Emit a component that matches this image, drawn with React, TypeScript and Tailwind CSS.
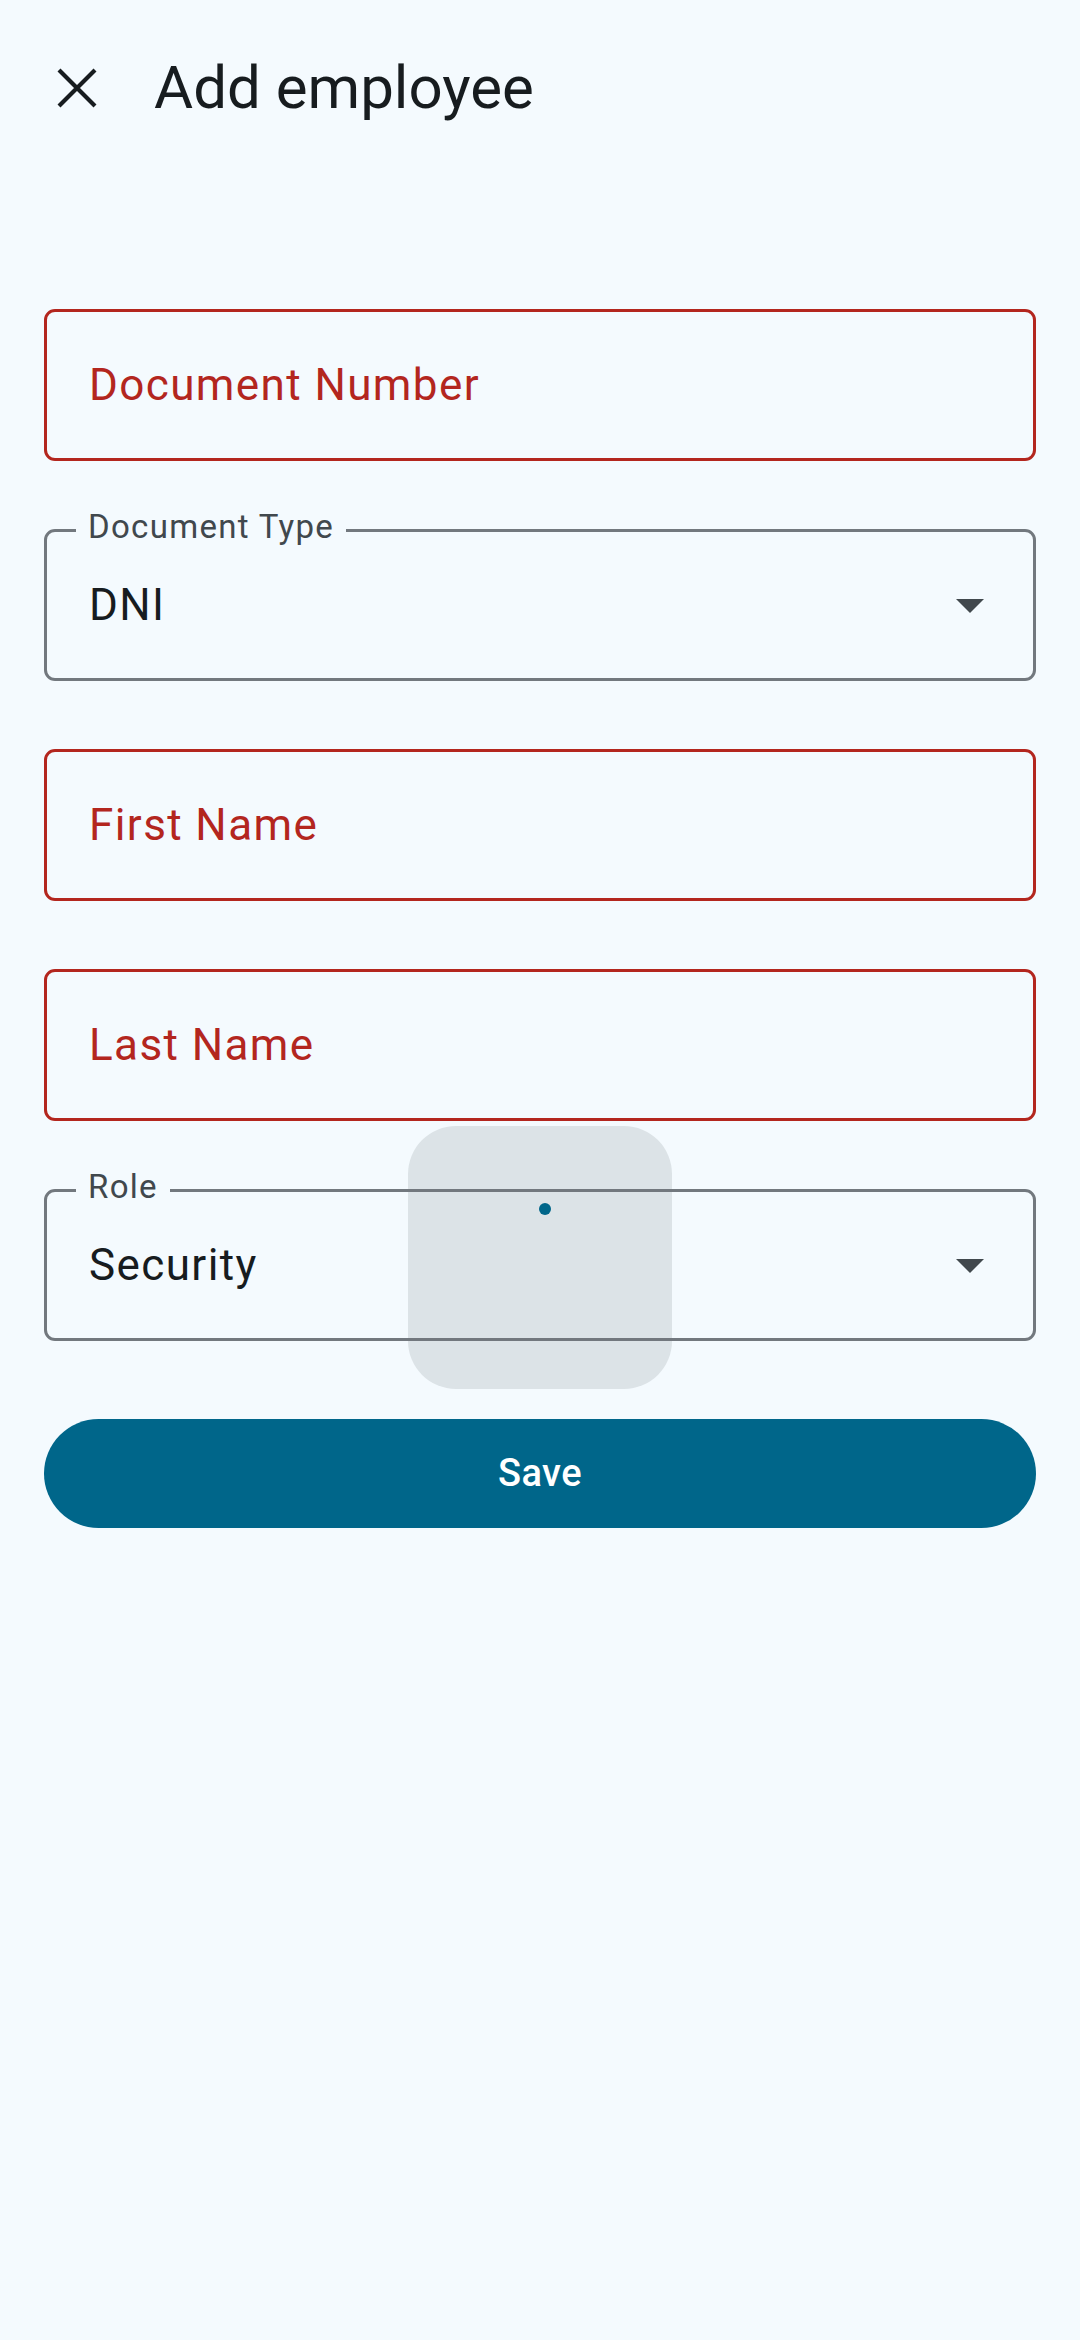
import React from "react";

const font = "font-['Roboto','Liberation_Sans',sans-serif]";

function ErrorField({ label }: { label: string }) {
  return (
    <div className="h-[152px] rounded-[11px] border-[3px] border-[#b3261e] flex items-center pl-[42px]">
      <span className="text-[44px] leading-[52px] tracking-[1.4px] text-[#b3261e]">{label}</span>
    </div>
  );
}

function SelectField({ label, value }: { label: string; value: string }) {
  return (
    <div className="relative h-[152px] rounded-[11px] border-[3px] border-[#72787e] flex items-center pl-[42px] pr-[49px]">
      <span className="absolute left-[29px] top-[-21px] px-[12px] bg-[#f4fafe] text-[33px] leading-[32px] tracking-[1.3px] text-[#41484d]">
        {label}
      </span>
      <span className="flex-1 text-[44px] leading-[52px] tracking-[1.4px] text-[#171c1f]">{value}</span>
      <svg width="28" height="15" viewBox="0 0 28 15" className="mt-[2px]">
        <path d="M0 0 L28 0 L14 14 Z" fill="#41484d" />
      </svg>
    </div>
  );
}

export default function App() {
  return (
    <div className={`relative w-[1080px] min-h-[2340px] bg-[#f4fafe] ${font}`}>
      {/* pressed ripple overlay */}
      <div className="absolute left-[408px] top-[1126px] w-[264px] h-[263px] rounded-[48px] bg-[#dce3e7]" />
      <div className="absolute left-[539px] top-[1203px] w-[12px] h-[12px] rounded-full bg-[#00668a] z-20" />

      <div className="relative z-10">
        <header className="flex items-center pl-[44px] pt-[55px] h-[121px]">
          <div className="w-[66px] h-[66px] flex items-center justify-center">
            <svg width="40" height="40" viewBox="0 0 40 40">
              <path d="M2 2 L38 38 M38 2 L2 38" stroke="#171c1f" strokeWidth="4.2" />
            </svg>
          </div>
          <h1 className="ml-[44px] text-[60px] leading-[66px] text-[#171c1f] font-normal">Add employee</h1>
        </header>

        <main className="mt-[188px] px-[44px] flex flex-col">
          <div className="flex flex-col gap-[68px]">
            <ErrorField label="Document Number" />
            <SelectField label="Document Type" value="DNI" />
            <ErrorField label="First Name" />
            <ErrorField label="Last Name" />
            <SelectField label="Role" value="Security" />
          </div>
          <button className="mt-[78px] h-[109px] w-full rounded-full bg-[#00668a] text-white text-[38px] font-medium tracking-[0.4px]">
            Save
          </button>
        </main>
      </div>
    </div>
  );
}
